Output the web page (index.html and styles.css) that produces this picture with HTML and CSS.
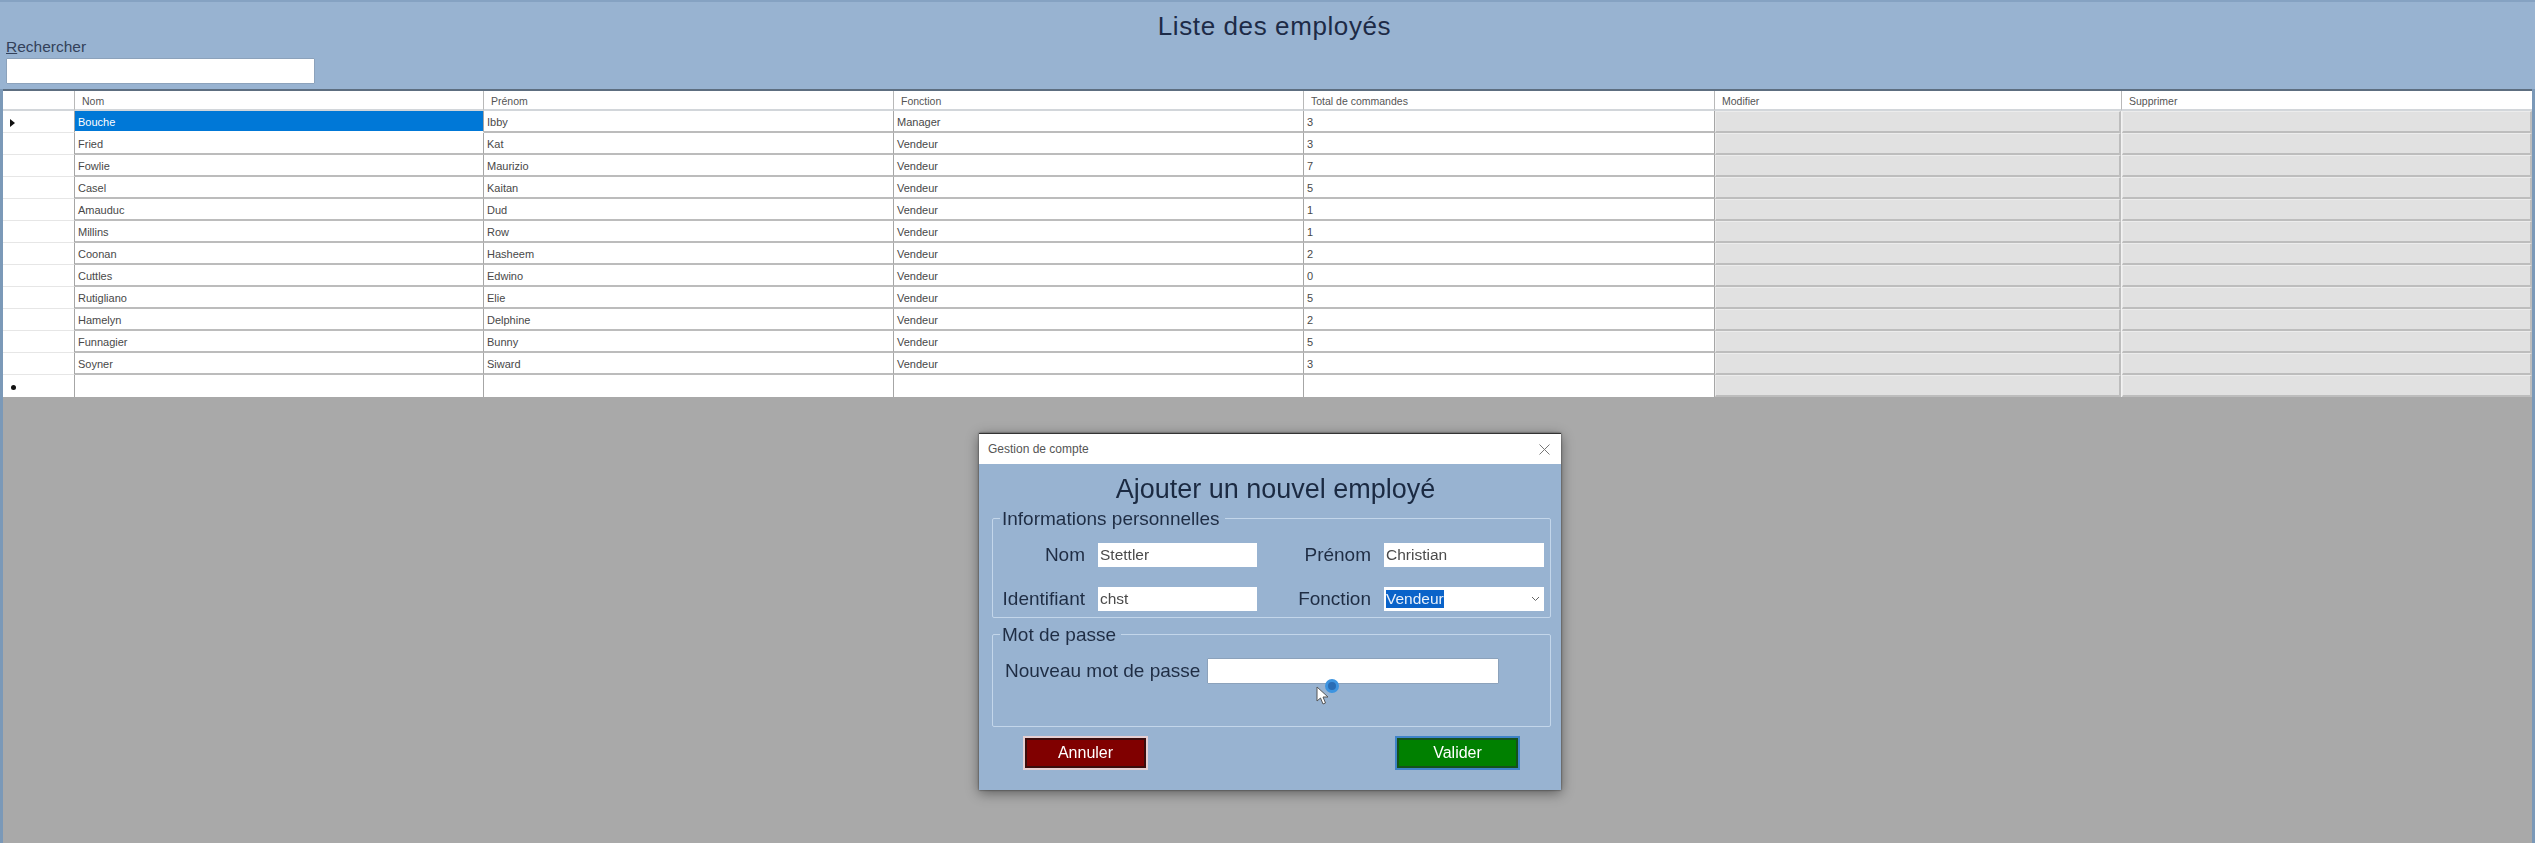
FILE: index.html
```html
<!doctype html>
<html lang="fr">
<head>
    <meta charset="UTF-8">
    <title>Liste des employés</title>
    <link rel="stylesheet" href="styles.css">
</head>
<body>
<div class="app">
    <div class="top">
        <h1 class="title">Liste des employés</h1>
        <label class="search-label"><u>R</u>echercher</label>
        <input class="search" type="text">
    </div>
    <table class="grid">
        <colgroup>
            <col class="c-head"><col class="c-nom"><col class="c-prenom"><col class="c-fonction"><col class="c-total"><col class="c-modif"><col class="c-suppr">
        </colgroup>
        <thead>
        <tr><th></th><th>Nom</th><th>Prénom</th><th>Fonction</th><th>Total de commandes</th><th>Modifier</th><th>Supprimer</th></tr>
        </thead>
        <tbody>
        <tr><td class="rh"><i class="arrow"></i></td><td class="sel">Bouche</td><td>Ibby</td><td>Manager</td><td>3</td><td class="bc"><button></button></td><td class="bc"><button></button></td></tr>
        <tr><td class="rh"></td><td>Fried</td><td>Kat</td><td>Vendeur</td><td>3</td><td class="bc"><button></button></td><td class="bc"><button></button></td></tr>
        <tr><td class="rh"></td><td>Fowlie</td><td>Maurizio</td><td>Vendeur</td><td>7</td><td class="bc"><button></button></td><td class="bc"><button></button></td></tr>
        <tr><td class="rh"></td><td>Casel</td><td>Kaitan</td><td>Vendeur</td><td>5</td><td class="bc"><button></button></td><td class="bc"><button></button></td></tr>
        <tr><td class="rh"></td><td>Amauduc</td><td>Dud</td><td>Vendeur</td><td>1</td><td class="bc"><button></button></td><td class="bc"><button></button></td></tr>
        <tr><td class="rh"></td><td>Millins</td><td>Row</td><td>Vendeur</td><td>1</td><td class="bc"><button></button></td><td class="bc"><button></button></td></tr>
        <tr><td class="rh"></td><td>Coonan</td><td>Hasheem</td><td>Vendeur</td><td>2</td><td class="bc"><button></button></td><td class="bc"><button></button></td></tr>
        <tr><td class="rh"></td><td>Cuttles</td><td>Edwino</td><td>Vendeur</td><td>0</td><td class="bc"><button></button></td><td class="bc"><button></button></td></tr>
        <tr><td class="rh"></td><td>Rutigliano</td><td>Elie</td><td>Vendeur</td><td>5</td><td class="bc"><button></button></td><td class="bc"><button></button></td></tr>
        <tr><td class="rh"></td><td>Hamelyn</td><td>Delphine</td><td>Vendeur</td><td>2</td><td class="bc"><button></button></td><td class="bc"><button></button></td></tr>
        <tr><td class="rh"></td><td>Funnagier</td><td>Bunny</td><td>Vendeur</td><td>5</td><td class="bc"><button></button></td><td class="bc"><button></button></td></tr>
        <tr><td class="rh"></td><td>Soyner</td><td>Siward</td><td>Vendeur</td><td>3</td><td class="bc"><button></button></td><td class="bc"><button></button></td></tr>
        <tr class="new"><td class="rh"><i class="dot"></i></td><td></td><td></td><td></td><td></td><td class="bc"><button></button></td><td class="bc"><button></button></td></tr>
        </tbody>
    </table>

    <div class="dialog">
        <div class="dialog-bar">
            <span>Gestion de compte</span>
            <svg class="close" width="11" height="11" viewBox="0 0 11 11"><path d="M0.5 0.5L10.5 10.5M10.5 0.5L0.5 10.5" stroke="#777" stroke-width="1" fill="none"/></svg>
        </div>
        <div class="dialog-body">
            <h2 class="dialog-title">Ajouter un nouvel employé</h2>
            <fieldset class="group">
                <legend>Informations personnelles</legend>
                <div class="fields">
                    <label>Nom</label><input type="text" value="Stettler">
                    <label>Prénom</label><input type="text" value="Christian">
                    <label>Identifiant</label><input type="text" value="chst">
                    <label>Fonction</label>
                    <div class="combo">
                        <span class="combo-sel">Vendeur</span>
                        <svg width="9" height="6" viewBox="0 0 9 6"><path d="M1 1L4.5 4.5L8 1" stroke="#666" stroke-width="1" fill="none"/></svg>
                    </div>
                </div>
            </fieldset>
            <fieldset class="group group-pass">
                <legend>Mot de passe</legend>
                <div class="pass-row">
                    <label>Nouveau mot de passe</label><input class="pass" type="password">
                </div>
            </fieldset>
            <div class="actions">
                <button class="btn btn-cancel">Annuler</button>
                <button class="btn btn-ok">Valider</button>
            </div>
        </div>
    </div>

    <div class="busy"></div>
    <svg class="cursor" width="14" height="20" viewBox="0 0 14 20"><path d="M1 1L1 15L4.5 12L7 18L9.5 17L7 11L12 11Z" fill="#fff" stroke="#555" stroke-width="1"/></svg>
</div>
</body>
</html>
```

FILE: styles.css
```css
*{margin: 0;padding: 0;box-sizing: border-box}
html,body{height: 100%;overflow: hidden}
body{background: #a9a9a9;font-family: "Liberation Sans", Arial, sans-serif;color: #1c2a40}

.app{
    position: relative;
    height: 843px;
    border-left: 3px solid #7b99b8;
    border-right: 3px solid #7b99b8;
    filter: blur(0.6px);
}

/* top panel */
.top{
    height: 89px;
    margin: 0 -3px;
    padding: 0 0 0 6px;
    background: #98b3d1;
    border-top: 2px solid #85a2c2;
    display: flex;
    flex-direction: column;
    align-items: flex-start;
}
.title{
    align-self: center;
    margin: 10px 0 0 8px;
    font-size: 26px;
    line-height: 29px;
    font-weight: normal;
    letter-spacing: 0.6px;
    color: #1d2b47;
}
.search-label{font-size: 15.5px;line-height: 18px;margin-top: -3px;color: #33415a}
.search{width: 307px;height: 24px;margin: 3px 0 0 1px;border: none;background: #fff;box-shadow: 0 0 1px #555}

/* data grid */
.grid{
    width: 2529px;
    table-layout: fixed;
    border-collapse: separate;
    border-spacing: 0;
    border-top: 2px solid #5d6e80;
    background: #fff;
    font-size: 11px;
    color: #484848;
}
.c-head{width: 72px}
.c-nom{width: 409px}
.c-prenom{width: 410px}
.c-fonction{width: 410px}
.c-total{width: 411px}
.c-modif{width: 407px}
.c-suppr{width: 410px}
.grid th{
    height: 20px;
    font-weight: normal;
    font-size: 10.5px;
    text-align: left;
    padding: 1px 0 0 7px;
    border-right: 1px solid #b9b9b9;
    border-bottom: 2px solid #d2d6da;
    color: #555;
}
.grid td{
    height: 22px;
    padding: 2px 0 0 3px;
    border-right: 1px solid #a6a6a6;
    border-bottom: 2px solid #bcbcbc;
    overflow: hidden;
    white-space: nowrap;
}
.grid .rh{border-bottom: 1px solid #e6e6e6;padding-left: 0}
.grid .sel{background: #0078d7;color: #fff;border-bottom-color: #fff}
.grid .bc{padding: 0;border-right: 1px solid #f2f2f2;border-bottom: none;background: #f2f2f2}
.grid .new td{border-bottom: none}
.grid th:last-child,.grid td:last-child{border-right: none}
.bc button{
    display: block;
    width: 100%;
    height: 22px;
    background: #e1e1e1;
    border: none;
    border-right: 2px solid #bdbdbd;
    border-bottom: 2px solid #bdbdbd;
    border-top: 1px solid #ececec;
    border-left: 1px solid #ececec;
}
.arrow{
    display: block;
    margin-left: 7px;
    width: 0;
    height: 0;
    border-left: 5px solid #111;
    border-top: 4px solid transparent;
    border-bottom: 4px solid transparent;
}
.dot{display: block;margin-left: 8px;width: 5px;height: 5px;border-radius: 50%;background: #111}

/* account window */
.dialog{
    position: absolute;
    left: 976px;
    top: 433px;
    width: 582px;
    height: 357px;
    background: #98b3d1;
    border-top: 1px solid #333;
    box-shadow: 0 3px 12px rgba(0,0,0,.45), 0 0 2px rgba(0,0,0,.6);
    display: flex;
    flex-direction: column;
}
.dialog-bar{
    height: 30px;
    flex: none;
    background: #fff;
    display: flex;
    align-items: center;
    justify-content: space-between;
    padding: 0 11px 0 9px;
    font-size: 12px;
    color: #555;
}
.dialog-body{padding: 0 10px 0 13px}
.dialog-title{
    height: 44px;
    margin-left: 8px;
    font-size: 27px;
    line-height: 50px;
    font-weight: normal;
    text-align: center;
    color: #1b2a42;
}
.group{
    border: 1px solid #c3d6ea;
    border-radius: 2px;
    padding: 0;
}
.group legend{
    margin-left: 7px;
    padding: 1px 5px 0 2px;
    font-size: 19px;
    line-height: 20px;
    color: #1f2d44;
}
.fields{
    display: grid;
    grid-template-columns: 92px 159px 101px 160px;
    column-gap: 13px;
    row-gap: 20px;
    padding: 14px 0 6px;
    align-items: center;
}
.fields label{text-align: right;font-size: 19px;color: #1f2d44}
.fields input,.combo{height: 24px;border: none;background: #fff;font-size: 15.5px;color: #4a4a4a;padding-left: 2px;font-family: inherit}
.combo{display: flex;align-items: center;justify-content: space-between;padding-right: 4px}
.combo-sel{background: #0a63c9;color: #e8f0fa;line-height: 18px}
.group-pass{margin-top: 6px}
.pass-row{display: flex;align-items: center;gap: 8px;padding: 14px 0 43px 12px}
.pass-row label{font-size: 19px;color: #1f2d44;white-space: nowrap;width: 195px}
.pass{width: 290px;height: 24px;border: none;background: #fff;box-shadow: 0 0 1px #555}
.actions{display: flex;justify-content: space-between;padding: 11px 33px 0 33px}
.btn{
    width: 121px;
    height: 30px;
    font-family: inherit;
    font-size: 16px;
    color: #fff;
    border: 2px solid #111;
}
.btn-cancel{background: #800000;border-color: #3a0c0c;outline: 2px solid #e6cfd2}
.btn-ok{background: #008000;border-color: #14521c;outline: 2px solid #3f83c8}

/* mouse pointer from the recording */
.busy{
    position: absolute;
    left: 1322px;
    top: 679px;
    width: 14px;
    height: 14px;
    border-radius: 50%;
    border: 3px solid #3d94e0;
    background: #2a6db5;
}
.cursor{position: absolute;left: 1313px;top: 686px}
```
